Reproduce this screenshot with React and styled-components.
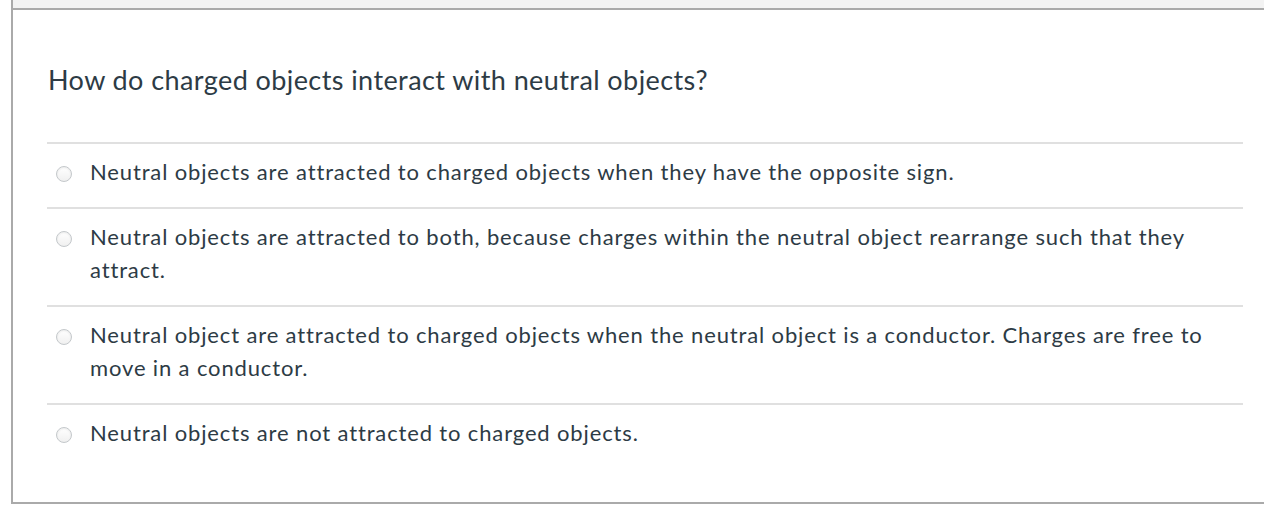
import React from 'react';
import styled, { createGlobalStyle } from 'styled-components';

const GlobalStyle = createGlobalStyle`
  html, body {
    margin: 0;
    padding: 0;
    background: #fff;
    overflow: hidden;
  }
  body {
    font-family: Lato, "Noto Sans", sans-serif;
    color: #2d3b45;
  }
`;

const QuestionBox = styled.div`
  margin-left: 11px;
  width: 1270px;
  border-left: 2px solid #aaaaaa;
  border-right: 2px solid #aaaaaa;
  border-bottom: 2px solid #aaaaaa;
  box-sizing: border-box;
`;

const Header = styled.div`
  height: 8px;
  background: #f3f3f3;
  border-bottom: 2px solid #aaaaaa;
`;

const Body = styled.div`
  padding: 52px 36px 34px 34px;
`;

const QuestionText = styled.div`
  font-size: 27px;
  line-height: 36px;
  letter-spacing: 0.42px;
  padding-left: 1px;
  margin-bottom: 44px;
`;

const AnswerList = styled.div`
  display: flex;
  flex-direction: column;
`;

const AnswerRow = styled.label`
  display: flex;
  align-items: flex-start;
  gap: 18px;
  padding: 11px 0 19px 9px;
  border-top: 2px solid #e0e0e0;
  font-size: 22px;
  line-height: 33px;
  letter-spacing: 0.86px;
  cursor: pointer;
`;

const Radio = styled.span`
  flex: none;
  width: 16px;
  height: 16px;
  margin-top: 11px;
  box-sizing: border-box;
  border-radius: 50%;
  border: 1px solid #c4c8cb;
  background: linear-gradient(to bottom, #ffffff 0%, #f0f0f0 100%);
  box-shadow: inset 0 1px 2px rgba(0, 0, 0, 0.08);
`;

const AnswerText = styled.span`
  flex: 1;
`;

const answers = [
  'Neutral objects are attracted to charged objects when they have the opposite sign.',
  'Neutral objects are attracted to both, because charges within the neutral object rearrange such that they attract.',
  'Neutral object are attracted to charged objects when the neutral object is a conductor. Charges are free to move in a conductor.',
  'Neutral objects are not attracted to charged objects.',
];

export default function App() {
  return (
    <>
      <GlobalStyle />
      <QuestionBox>
        <Header />
        <Body>
          <QuestionText>How do charged objects interact with neutral objects?</QuestionText>
          <AnswerList>
            {answers.map((text) => (
              <AnswerRow key={text}>
                <Radio />
                <AnswerText>{text}</AnswerText>
              </AnswerRow>
            ))}
          </AnswerList>
        </Body>
      </QuestionBox>
    </>
  );
}
